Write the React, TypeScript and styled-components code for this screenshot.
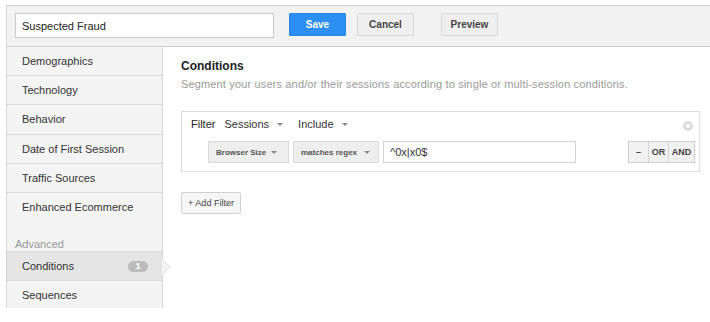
import {createGlobalStyle} from "styled-components";
import styled from "styled-components";

const GlobalStyle = createGlobalStyle`
  html, body {
    margin: 0;
    padding: 0;
    background: #fff;
  }
  body {
    font-family: "Liberation Sans", Arial, sans-serif;
    color: #333;
  }
`;

const Frame = styled.div`
  width: 710px;
  height: 322px;
  box-sizing: border-box;
  padding: 5px 0 0 6px;
  overflow: hidden;
`;

const Shell = styled.div`
  border-top: 1px solid #cfcfcf;
  border-left: 1px solid #d6d6d6;
`;

const TopBar = styled.div`
  height: 41px;
  box-sizing: border-box;
  background: #f2f2f2;
  border-bottom: 1px solid #cfcfcf;
  display: flex;
  align-items: flex-start;
  padding: 7px 0 0 8px;
`;

const NameInput = styled.input`
  width: 259px;
  height: 25px;
  box-sizing: border-box;
  border: 1px solid #c9c9c9;
  background: #fff;
  padding: 0 6px;
  font: 11px "Liberation Sans", Arial, sans-serif;
  color: #222;
  margin-right: 15px;
`;

const Button = styled.button<{ $primary?: boolean; $gap?: number }>`
  width: 57px;
  height: 23px;
  box-sizing: border-box;
  margin-left: ${p => p.$gap ?? 0}px;
  border: 1px solid ${p => (p.$primary ? "#2a84e0" : "#d8d8d8")};
  border-radius: 1px;
  background: ${p => (p.$primary ? "#2d8ff2" : "#efefef")};
  color: ${p => (p.$primary ? "#fff" : "#444")};
  font: bold 10px "Liberation Sans", Arial, sans-serif;
  padding: 0;
`;

const Body = styled.div`
  display: flex;
  align-items: flex-start;
`;

const Sidebar = styled.nav`
  width: 155px;
  height: 261px;
  background: #f4f4f4;
  border-right: 1px solid #d6d6d6;
  display: flex;
  flex-direction: column;
`;

const NavItem = styled.div<{ $active?: boolean; $divider?: boolean }>`
  position: relative;
  height: 28.2px;
  flex-shrink: 0;
  display: flex;
  align-items: center;
  padding: 0 15px;
  font-size: 11px;
  color: #333;
  background: ${p => (p.$active ? "#e5e5e5" : "transparent")};
  border-bottom: 1px solid ${p => (p.$divider ? "#d9d9d9" : "transparent")};
  border-top: ${p => (p.$active ? "1px solid #d9d9d9" : "none")};
`;

const SectionLabel = styled.div`
  height: 29px;
  flex-shrink: 0;
  box-sizing: border-box;
  padding: 16px 0 0 8px;
  font-size: 11px;
  color: #9a9a9a;
`;

const Badge = styled.span`
  margin-left: auto;
  margin-right: -1px;
  width: 20px;
  height: 11px;
  border-radius: 6px;
  background: #bcbcbc;
  color: #fff;
  font-size: 9px;
  font-weight: bold;
  display: flex;
  align-items: center;
  justify-content: center;
`;

const Pointer = styled.svg`
  position: absolute;
  right: -9px;
  top: 7px;
`;

const Main = styled.main`
  flex: 1;
  padding: 11px 10px 0 18px;
`;

const Title = styled.h2`
  margin: 0;
  font-size: 12px;
  font-weight: bold;
  color: #222;
  line-height: 16px;
`;

const Subtitle = styled.p`
  margin: 3px 0 0;
  font-size: 11px;
  color: #999;
  line-height: 14px;
  letter-spacing: 0.15px;
`;

const FilterBox = styled.div`
  position: relative;
  margin-top: 20px;
  width: 519px;
  box-sizing: border-box;
  border: 1px solid #dcdcdc;
  padding: 0 4px 8px 9px;
`;

const FilterHead = styled.div`
  height: 24px;
  display: flex;
  align-items: center;
  font-size: 11px;
  color: #222;
`;

const Picker = styled.span<{ $gap: number }>`
  margin-left: ${p => p.$gap}px;
  font-size: 11px;
  color: #333;
  display: flex;
  align-items: center;
`;

const Caret = styled.span`
  display: inline-block;
  margin-left: 8px;
  width: 0;
  height: 0;
  border-left: 3px solid transparent;
  border-right: 3px solid transparent;
  border-top: 3px solid #888;
`;

const CloseDot = styled.svg`
  position: absolute;
  right: 6px;
  top: 9px;
`;

const ConditionRow = styled.div`
  margin-top: 5px;
  padding-left: 17px;
  display: flex;
  align-items: center;
  height: 22px;
`;

const Select = styled.div<{ $width: number; $caretGap: number }>`
  width: ${p => p.$width}px;
  height: 22px;
  box-sizing: border-box;
  margin-right: 4px;
  border: 1px solid #dadada;
  background: #eeeeee;
  display: flex;
  align-items: center;
  padding: 0 ${p => p.$caretGap}px 0 7px;
  white-space: nowrap;
  font-size: 8px;
  font-weight: bold;
  color: #555;
  ${Caret} {
    margin-left: auto;
  }
`;

const ValueInput = styled.input`
  width: 193px;
  height: 22px;
  box-sizing: border-box;
  border: 1px solid #d3d3d3;
  padding: 0 6px;
  font: 11px "Liberation Sans", Arial, sans-serif;
  color: #333;
`;

const Segmented = styled.div`
  margin-left: auto;
  margin-right: 0;
  display: flex;
  height: 20px;
  border: 1px solid #cfcfcf;
  background: #f1f1f1;
`;

const SegButton = styled.span<{ $width: number }>`
  width: ${p => p.$width}px;
  display: flex;
  align-items: center;
  justify-content: center;
  font-size: 9px;
  font-weight: bold;
  color: #444;
  & + & {
    border-left: 1px solid #d6d6d6;
  }
`;

const AddFilter = styled.button`
  margin-top: 20px;
  height: 22px;
  width: 60px;
  box-sizing: border-box;
  border: 1px solid #d0d0d0;
  border-radius: 2px;
  background: #f5f5f5;
  font: 9px "Liberation Sans", Arial, sans-serif;
  color: #444;
  padding: 0;
`;

const navItems = [
    "Demographics",
    "Technology",
    "Behavior",
    "Date of First Session",
    "Traffic Sources",
];

export default function App() {
    return (
        <>
            <GlobalStyle/>
            <Frame>
                <Shell>
                    <TopBar>
                        <NameInput defaultValue="Suspected Fraud"/>
                        <Button $primary>Save</Button>
                        <Button $gap={11}>Cancel</Button>
                        <Button $gap={27}>Preview</Button>
                    </TopBar>
                    <Body>
                        <Sidebar>
                            {navItems.map(item => (
                                <NavItem key={item} $divider>{item}</NavItem>
                            ))}
                            <NavItem>Enhanced Ecommerce</NavItem>
                            <SectionLabel>Advanced</SectionLabel>
                            <NavItem $active $divider>
                                Conditions
                                <Badge>1</Badge>
                                <Pointer width="9" height="16" viewBox="0 0 9 16">
                                    <path d="M0 0 L8 8 L0 16 Z" fill="#f4f4f4"/>
                                    <path d="M0.5 0.5 L8 8 L0.5 15.5" fill="none" stroke="#dedede"/>
                                </Pointer>
                            </NavItem>
                            <NavItem>Sequences</NavItem>
                        </Sidebar>
                        <Main>
                            <Title>Conditions</Title>
                            <Subtitle>
                                Segment your users and/or their sessions according to single or multi-session conditions.
                            </Subtitle>
                            <FilterBox>
                                <FilterHead>
                                    Filter
                                    <Picker $gap={9}>Sessions<Caret/></Picker>
                                    <Picker $gap={15}>Include<Caret/></Picker>
                                </FilterHead>
                                <CloseDot width="10" height="10" viewBox="0 0 10 10">
                                    <circle cx="5" cy="5" r="5" fill="#dcdcdc"/>
                                    <path d="M3.2 3.2 L6.8 6.8 M6.8 3.2 L3.2 6.8" stroke="#fff" strokeWidth="1.3"/>
                                </CloseDot>
                                <ConditionRow>
                                    <Select $width={81} $caretGap={11}>Browser Size<Caret/></Select>
                                    <Select $width={86} $caretGap={8}>matches regex<Caret/></Select>
                                    <ValueInput defaultValue="^0x|x0$"/>
                                    <Segmented>
                                        <SegButton $width={19}>–</SegButton>
                                        <SegButton $width={19}>OR</SegButton>
                                        <SegButton $width={25}>AND</SegButton>
                                    </Segmented>
                                </ConditionRow>
                            </FilterBox>
                            <AddFilter>+ Add Filter</AddFilter>
                        </Main>
                    </Body>
                </Shell>
            </Frame>
        </>
    );
}
